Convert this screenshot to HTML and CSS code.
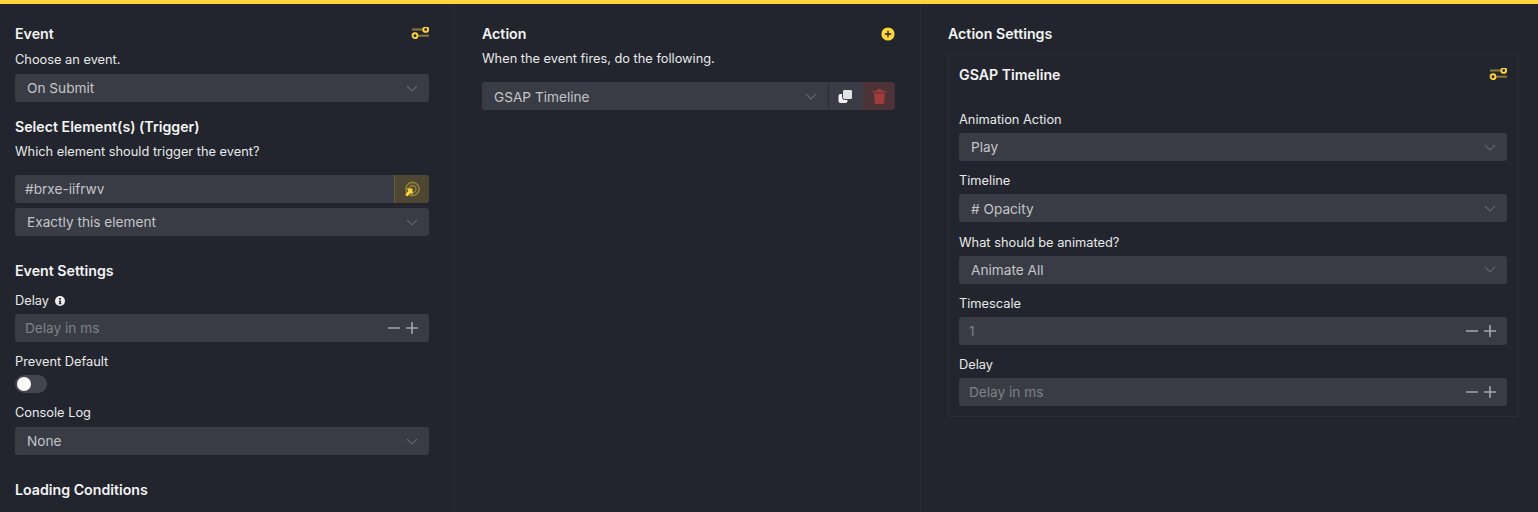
FILE: index.html
```html
<!DOCTYPE html>
<html lang="en">
<head>
<meta charset="utf-8">
<title>Interaction</title>
<link rel="stylesheet" href="styles.css">
</head>
<body>
<svg class="sprites" width="0" height="0" aria-hidden="true">
  <symbol id="sliders" viewBox="0 0 18 14">
    <rect x="1" y="1.500" width="11" height="2" fill="#8b7a3a"/>
    <rect x="7" y="7.700" width="11" height="2" fill="#8b7a3a"/>
    <circle cx="14.700" cy="2.500" r="2.400" fill="#22252d" stroke="#ffd53e" stroke-width="1.900"/>
    <circle cx="4" cy="8.700" r="2.400" fill="#22252d" stroke="#ffd53e" stroke-width="1.900"/>
  </symbol>
  <symbol id="chev" viewBox="0 0 12 7">
    <path d="M1 1l5 5 5-5" fill="none" stroke="#5f636c" stroke-width="1.200"/>
  </symbol>
  <symbol id="stepper" viewBox="0 0 30 14">
    <path d="M0 7h12M18 7h12M24 1v12" fill="none" stroke="#a3a5aa" stroke-width="1.600"/>
  </symbol>
</svg>
<div class="topbar"></div>
<main class="columns">
  <section class="col col-event">
    <div class="head"><h3>Event</h3><svg class="sl"><use href="#sliders"/></svg></div>
    <p class="desc d1">Choose an event.</p>
    <div class="field select s1"><span>On Submit</span><svg class="chev"><use href="#chev"/></svg></div>
    <h3 class="h-sel">Select Element(s) (Trigger)</h3>
    <p class="desc d2">Which element should trigger the event?</p>
    <div class="field text s2">
      <span class="val">#brxe-iifrwv</span>
      <span class="target">
        <svg width="16" height="16" viewBox="0 0 16 16">
          <circle cx="8.500" cy="8" r="6.600" fill="none" stroke="#8f7d38" stroke-width="1.600"/>
          <circle cx="8.500" cy="8" r="3.400" fill="none" stroke="#8f7d38" stroke-width="1.600"/>
          <path d="M8.500 7.500V14L6.500 12l-3.300 3.500-2-2L4.500 10l-2-2.500z" fill="#ffd53e"/>
        </svg>
      </span>
    </div>
    <div class="field select s3"><span>Exactly this element</span><svg class="chev"><use href="#chev"/></svg></div>
    <h3 class="h-set">Event Settings</h3>
    <label class="lbl l-delay">Delay
      <svg class="info" width="10" height="10" viewBox="0 0 10 10"><circle cx="5" cy="5" r="5" fill="#eceded"/><path d="M4 2h2v1.500H4zM3.800 4.400H6v3h.6v.9H3.700v-.9h.6V5.300h-.5z" fill="#22252d"/></svg>
    </label>
    <div class="field text s4"><span class="ph">Delay in ms</span><svg class="step"><use href="#stepper"/></svg></div>
    <label class="lbl l-prev">Prevent Default</label>
    <div class="toggle"><i></i></div>
    <label class="lbl l-cons">Console Log</label>
    <div class="field select s5"><span>None</span><svg class="chev"><use href="#chev"/></svg></div>
    <h3 class="h-load">Loading Conditions</h3>
  </section>

  <section class="col col-action">
    <div class="head"><h3>Action</h3>
      <svg class="plus" width="14" height="14" viewBox="0 0 14 14"><circle cx="7" cy="7" r="6.600" fill="#ffd53e"/><path d="M7 3.800v6.400M3.800 7h6.400" stroke="#22252d" stroke-width="1.300"/></svg>
    </div>
    <p class="desc d3">When the event fires, do the following.</p>
    <div class="action-row">
      <div class="field select grow"><span class="nudge">GSAP Timeline</span><svg class="chev"><use href="#chev"/></svg></div>
      <span class="btn dup">
        <svg width="15" height="14" viewBox="0 0 15 14"><rect x="0.500" y="5" width="9" height="9" rx="2" fill="#f4f4f4"/><rect x="4.500" y="0.500" width="10" height="10" rx="2" fill="#e3e3e3" stroke="#393c45" stroke-width="1"/></svg>
      </span>
      <span class="btn del">
        <svg width="15" height="16" viewBox="0 0 14 16"><path d="M0 3h14v1.400H0zM4.500 1.200h5V3h-5z" fill="#a03a3d"/><path d="M1.500 5.200h11L11.600 15a1 1 0 0 1-1 1H3.400a1 1 0 0 1-1-1z" fill="#a03a3d"/></svg>
      </span>
    </div>
  </section>

  <section class="col col-settings">
    <div class="head"><h3>Action Settings</h3></div>
    <div class="box">
      <div class="box-head"><h3>GSAP Timeline</h3><svg class="sl"><use href="#sliders"/></svg></div>
      <div class="stack">
        <div class="item"><label class="lbl">Animation Action</label><div class="field select"><span>Play</span><svg class="chev"><use href="#chev"/></svg></div></div>
        <div class="item"><label class="lbl">Timeline</label><div class="field select"><span class="nudge"># Opacity</span><svg class="chev"><use href="#chev"/></svg></div></div>
        <div class="item"><label class="lbl">What should be animated?</label><div class="field select"><span>Animate All</span><svg class="chev"><use href="#chev"/></svg></div></div>
        <div class="item"><label class="lbl">Timescale</label><div class="field text"><span class="ph">1</span><svg class="step"><use href="#stepper"/></svg></div></div>
        <div class="item"><label class="lbl">Delay</label><div class="field text"><span class="ph">Delay in ms</span><svg class="step"><use href="#stepper"/></svg></div></div>
      </div>
    </div>
  </section>
</main>
</body>
</html>
```
FILE: styles.css
```css
* { box-sizing: border-box; margin: 0; padding: 0; }
html, body { height: 512px; overflow: hidden; }
body {
  background: #22252d;
  color: #e8e9ea;
  font-family: Inter, "Liberation Sans", sans-serif;
  font-size: 12.8px;
  line-height: 20px;
}
.sprites { position: absolute; }
.topbar { height: 4px; background: #ffd53e; }
.columns { display: flex; height: 508px; }
.col { padding-top: 20px; border-right: 1px solid #2a2d35; overflow: hidden; flex: none; }
.col-event { width: 455px; padding-left: 15px; padding-right: 25px; }
.col-action { width: 466px; padding-left: 27px; padding-right: 25px; }
.col-settings { width: 617px; padding-left: 27px; padding-right: 20px; border-right: 0; }

h3 { font-size: 14.2px; font-weight: 600; line-height: 20px; color: #f3f4f4; }
.desc, .lbl { display: block; color: #e8e9ea; height: 20px; padding-top: 1px; }
.head { display: flex; justify-content: space-between; align-items: center; height: 20px; }
.sl { width: 18px; height: 14px; flex: none; }

.field {
  height: 28px;
  background: #393c45;
  border-radius: 3px;
  display: flex;
  align-items: center;
  justify-content: space-between;
  font-size: 13.65px;
  color: #c4c5c9;
}
.select { padding: 0 11px 0 12px; }
.text { padding-left: 10px; padding-right: 10px; }
.chev { width: 12px; height: 7px; flex: none; }
.step { width: 30px; height: 14px; flex: none; margin-right: 1px; }
.ph { color: #7e8188; }
.nudge { padding-top: 2px; }

.d1 { margin-top: 5px; }
.s1 { margin-top: 5px; }
.h-sel { margin-top: 15px; }
.d2 { margin-top: 4px; }
.s2 { margin-top: 14px; padding-right: 0; overflow: hidden; }
.target {
  width: 35px; height: 28px;
  background: #4d4633;
  border-left: 1px solid #6a5e33;
  display: flex; align-items: center; justify-content: center;
}
.s3 { margin-top: 5px; }
.h-set { margin-top: 25px; }
.l-delay { margin-top: 9px; display: flex; align-items: center; gap: 6px; }
.s4 { margin-top: 4px; }
.l-prev { margin-top: 9px; }
.toggle {
  width: 32px; height: 18px; margin-top: 4px;
  background: #43464e; border-radius: 9px;
  display: flex; align-items: center; padding-left: 2px;
}
.toggle i { width: 14px; height: 14px; background: #fff; border-radius: 50%; }
.l-cons { margin-top: 9px; }
.s5 { margin-top: 5px; }
.h-load { margin-top: 25px; }

.d3 { margin-top: 4px; }
.action-row { display: flex; margin-top: 14px; height: 28px; border-radius: 3px; overflow: hidden; }
.grow { flex: 1; border-radius: 0; }
.btn { width: 33px; flex: none; display: flex; align-items: center; justify-content: center; }
.dup { background: #393c45; border-left: 1px solid #2a2d35; width: 34px; }
.del { background: #4b3338; border-left: 1px solid #393c45; }

.box { margin-top: 10px; height: 363px; border: 1px solid #2a2d35; padding: 0 10px; }
.box-head { display: flex; justify-content: space-between; align-items: center; height: 20px; margin-top: 10px; }
.stack { display: flex; flex-direction: column; gap: 9.25px; margin-top: 24px; }
.item .lbl { margin-bottom: 4px; }
```
